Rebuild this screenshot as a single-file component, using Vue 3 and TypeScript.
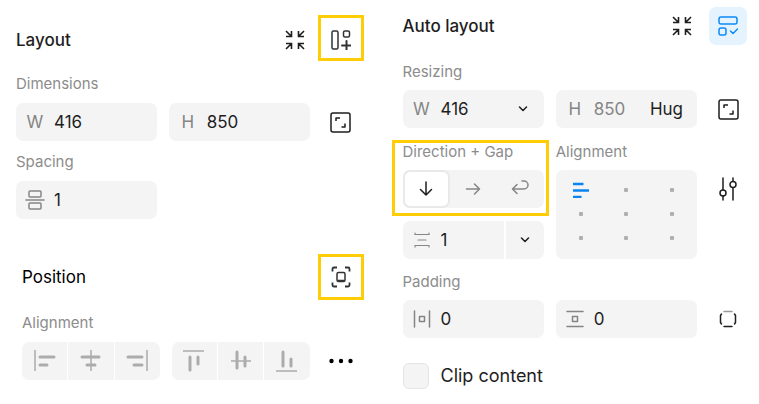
<script setup lang="ts">
import { ref } from 'vue'

type Direction = 'down' | 'right' | 'wrap'

const layoutWidth = ref('416')
const layoutHeight = ref('850')
const spacing = ref('1')

const autoWidth = ref('416')
const autoHeight = ref('850')
const gap = ref('1')
const paddingX = ref('0')
const paddingY = ref('0')
const clip = ref(false)

const direction = ref<Direction>('down')
const directions: { id: Direction; label: string; path: string }[] = [
  { id: 'down', label: 'Vertical', path: 'M10 3V16M4.5 10.500 10 16l5.500-5.500' },
  { id: 'right', label: 'Horizontal', path: 'M3.500 10H16.500M11.500 5l5 5-5 5' },
  { id: 'wrap', label: 'Wrap', path: 'M7 5.500 2.500 10 7 14.500M2.500 10H14a4 4 0 0 0 0-8h-2' },
]

const anchor = ref(0)

const alignGroups: { name: string; items: { label: string; rule: string; bars: string }[] }[] = [
  {
    name: 'Horizontal alignment',
    items: [
      { label: 'Align left', rule: 'M2 1v21', bars: 'M7 8h14M7 16h7' },
      { label: 'Align horizontal centers', rule: 'M12 1v21', bars: 'M3 8h17M8 16h8' },
      { label: 'Align right', rule: 'M22 1v21', bars: 'M3 8h14M9 16h8' },
    ],
  },
  {
    name: 'Vertical alignment',
    items: [
      { label: 'Align top', rule: 'M1 2h21', bars: 'M8 8v13M16 8v7' },
      { label: 'Align vertical centers', rule: 'M2 12h20', bars: 'M8 3v16M16 8v9' },
      { label: 'Align bottom', rule: 'M1 22h21', bars: 'M8 3v14M16 10v7' },
    ],
  },
]
</script>

<template>
  <main class="board">
    <div class="panel panel-left">
      <section class="section-layout">
        <header class="head">
          <h2 class="title">Layout</h2>
          <button class="tool" type="button" aria-label="Resize to fit">
            <svg width="20" height="20" viewBox="0 0 20 20" class="line collapse">
              <path d="M1 1 6 6M6.500 1v5.500H1M19 1 14 6M13.500 1v5.500H19M1 19 6 14M6.500 19v-5.500H1M19 19 14 14M13.500 19v-5.500H19" />
            </svg>
          </button>
          <button class="tool marked" type="button" aria-label="Use auto layout">
            <svg width="20" height="20" viewBox="0 0 20 20" class="line">
              <rect x="1" y="1" width="6" height="18" rx="1.500" />
              <rect x="12.500" y="1" width="6" height="6" rx="1.500" />
              <path d="M15.500 11v9M11 15.500h9" class="heavy" />
            </svg>
          </button>
        </header>
        <div class="cols">
          <div class="group pair">
            <h3 class="label">Dimensions</h3>
            <div class="halves">
              <label class="field"><span class="prefix">W</span><input v-model="layoutWidth" type="text" /></label>
              <label class="field"><span class="prefix">H</span><input v-model="layoutHeight" type="text" /></label>
            </div>
          </div>
          <button class="tool" type="button" aria-label="Lock aspect ratio">
            <svg width="21" height="21" viewBox="0 0 21 21" class="line">
              <rect x="1" y="1" width="19" height="19" rx="2" />
              <path d="M6 9V6h4M11.500 15H15v-3.500" class="corner" />
            </svg>
          </button>
        </div>
        <div class="cols">
          <div class="group">
            <h3 class="label">Spacing</h3>
            <label class="field">
              <span class="prefix">
                <svg width="20" height="22" viewBox="0 0 20 22" class="line" aria-label="Spacing" role="img">
                  <rect x="4" y="2" width="12" height="6" rx="1" />
                  <path d="M1 11h18" />
                  <rect x="4" y="14" width="12" height="6" rx="1" />
                </svg>
              </span>
              <input v-model="spacing" type="text" />
            </label>
          </div>
        </div>
      </section>

      <section class="section-position">
        <header class="head">
          <h2 class="title regular">Position</h2>
          <button class="tool marked" type="button" aria-label="Absolute position">
            <svg width="20" height="22" viewBox="0 0 20 22" class="line">
              <path d="M1.500 5.500V3q0-1.500 1.500-1.500h3M14 1.500H17q1.500 0 1.500 1.500v2.500M18.500 16.500V19q0 1.500-1.500 1.500h-3M6 20.500H3q-1.500 0-1.500-1.500v-2.500" class="dash" />
              <rect x="6" y="6.500" width="8" height="9" rx="1.500" />
              <path d="M7 14.500h6" />
            </svg>
          </button>
        </header>
        <div class="cols">
          <div class="group pair">
            <h3 class="label">Alignment</h3>
            <div class="halves">
              <div v-for="group in alignGroups" :key="group.name" class="segments" role="group" :aria-label="group.name">
                <button v-for="item in group.items" :key="item.label" type="button" :aria-label="item.label">
                  <svg width="24" height="24" viewBox="0 0 24 24">
                    <path :d="item.rule" class="rule" />
                    <path :d="item.bars" class="bars" />
                  </svg>
                </button>
              </div>
            </div>
          </div>
          <button class="tool" type="button" aria-label="More">
            <svg width="24" height="6" viewBox="0 0 24 6">
              <circle cx="2.500" cy="3" r="2.200" /><circle cx="12" cy="3" r="2.200" /><circle cx="21.500" cy="3" r="2.200" />
            </svg>
          </button>
        </div>
      </section>
    </div>

    <div class="panel panel-right">
      <header class="head">
        <h2 class="title">Auto layout</h2>
        <button class="tool" type="button" aria-label="Resize to fit">
          <svg width="20" height="20" viewBox="0 0 20 20" class="line collapse">
            <path d="M1 1 6 6M6.500 1v5.500H1M19 1 14 6M13.500 1v5.500H19M1 19 6 14M6.500 19v-5.500H1M19 19 14 14M13.500 19v-5.500H19" />
          </svg>
        </button>
        <button class="tool enabled" type="button" aria-label="Remove auto layout">
          <svg width="20" height="20" viewBox="0 0 20 20" class="line">
            <rect x="1" y="1" width="18" height="7" rx="2" />
            <rect x="1" y="12" width="7" height="7" rx="2" />
            <path d="m12.500 15 2.500 2.500 4.500-4.500" />
          </svg>
        </button>
      </header>

      <div class="cols">
        <div class="group pair">
          <h3 class="label">Resizing</h3>
          <div class="halves">
            <div class="field">
              <label class="prefix" for="auto-w">W</label>
              <input id="auto-w" v-model="autoWidth" type="text" />
              <button class="chevron" type="button" aria-label="Width options">
                <svg width="10" height="6" viewBox="0 0 10 6" class="line"><path d="m1.500 1 3.500 3.500L8.500 1" /></svg>
              </button>
            </div>
            <div class="field">
              <label class="prefix" for="auto-h">H</label>
              <input id="auto-h" v-model="autoHeight" class="muted" type="text" />
              <button class="mode" type="button">Hug</button>
            </div>
          </div>
        </div>
        <button class="tool" type="button" aria-label="Lock aspect ratio">
          <svg width="21" height="21" viewBox="0 0 21 21" class="line">
            <rect x="1" y="1" width="19" height="19" rx="2" />
            <path d="M6 9V6h4M11.500 15H15v-3.500" class="corner" />
          </svg>
        </button>
      </div>

      <div class="cols top">
        <div class="group">
          <div class="direction">
            <h3 class="label">Direction + Gap</h3>
            <div class="switch" role="group" aria-label="Direction">
              <button
                v-for="d in directions"
                :key="d.id"
                type="button"
                :aria-label="d.label"
                :aria-pressed="direction === d.id"
                :class="{ active: direction === d.id }"
                @click="direction = d.id"
              >
                <svg width="20" height="20" viewBox="0 0 20 20" class="line"><path :d="d.path" /></svg>
              </button>
            </div>
          </div>
          <div class="split">
            <label class="field">
              <span class="prefix">
                <svg width="16" height="16" viewBox="0 0 16 16" class="line thin" aria-label="Gap" role="img">
                  <path d="M1 1v1.500h14V1M4 8h8M1 15v-1.500h14V15" />
                </svg>
              </span>
              <input v-model="gap" type="text" />
            </label>
            <button class="field drop" type="button" aria-label="Gap options">
              <svg width="10" height="6" viewBox="0 0 10 6" class="line"><path d="m1.500 1 3.500 3.500L8.500 1" /></svg>
            </button>
          </div>
        </div>
        <div class="group">
          <h3 class="label">Alignment</h3>
          <div class="anchors" role="group" aria-label="Alignment">
            <button
              v-for="n in 9"
              :key="n"
              type="button"
              :aria-label="`Position ${n}`"
              :aria-pressed="anchor === n - 1"
              @click="anchor = n - 1"
            >
              <svg v-if="anchor === n - 1" width="18" height="16" viewBox="0 0 18 16" class="chosen">
                <path d="M1 2h10.500M1 8.500h16M1 15h8.500" />
              </svg>
              <span v-else class="dot"></span>
            </button>
          </div>
        </div>
        <button class="tool lowered" type="button" aria-label="Advanced settings">
          <svg width="20" height="24" viewBox="0 0 20 24" class="line">
            <path d="M5 1v11.500M5 19v4M15 1v3M15 11v12" />
            <circle cx="5" cy="16" r="3" /><circle cx="15" cy="7.500" r="3" />
          </svg>
        </button>
      </div>

      <div class="cols">
        <div class="group pair">
          <h3 class="label">Padding</h3>
          <div class="halves">
            <label class="field">
              <span class="prefix">
                <svg width="18" height="18" viewBox="0 0 18 18" class="line" aria-label="Horizontal padding" role="img">
                  <path d="M1.500 1v16M16.500 1v16" /><rect x="6.500" y="6.500" width="5" height="5" />
                </svg>
              </span>
              <input v-model="paddingX" type="text" />
            </label>
            <label class="field">
              <span class="prefix">
                <svg width="18" height="18" viewBox="0 0 18 18" class="line" aria-label="Vertical padding" role="img">
                  <path d="M1 1.500h16M1 16.500h16" /><rect x="6.500" y="6.500" width="5" height="5" />
                </svg>
              </span>
              <input v-model="paddingY" type="text" />
            </label>
          </div>
        </div>
        <button class="tool" type="button" aria-label="Individual padding">
          <svg width="18" height="18" viewBox="0 0 18 18" class="line">
            <path d="M5 1.500h8" class="soft" />
            <path d="M5 16.500h8" />
            <path d="M2.500 4 1.500 5.500v7l1 1.500M15.500 4l1 1.500v7l-1 1.500" />
          </svg>
        </button>
      </div>

      <label class="clip">
        <input v-model="clip" type="checkbox" />
        <span>Clip content</span>
      </label>
    </div>
  </main>
</template>

<style>
body {
  background: #fff;
}
</style>

<style scoped>
.board {
  display: grid;
  grid-template-columns: 1fr 1fr;
  font-family: Inter, "Liberation Sans", sans-serif;
  font-size: 17px;
  line-height: 24px;
  color: #1e1e1e;
}
.board *,
.board *::after {
  box-sizing: border-box;
}
.panel-left {
  padding: 15px 20px 20px 16px;
}
.panel-right {
  padding: 7px 12px 12px 23px;
}
h2,
h3 {
  margin: 0;
}
button,
input {
  font: inherit;
  color: inherit;
  margin: 0;
  padding: 0;
  border: 0;
  background: none;
}
svg {
  display: block;
  flex: none;
}
.line {
  fill: none;
  stroke: currentColor;
  stroke-width: 1.5;
  stroke-linecap: round;
  stroke-linejoin: round;
}
.line.thin {
  stroke-width: 1.2;
}
.heavy {
  stroke-width: 2;
}
.dash {
  stroke-width: 1.8;
  stroke-linecap: butt;
}
.corner {
  stroke-linecap: butt;
}
.soft {
  stroke: #999;
}
.collapse {
  stroke-width: 1.6;
  stroke-linecap: butt;
  stroke-linejoin: miter;
}

.head {
  display: flex;
  align-items: center;
  gap: 8px;
  min-height: 38px;
}
.panel-left .head {
  min-height: 46px;
  margin-bottom: 15px;
}
.section-layout .head {
  padding-top: 4px;
}
.section-layout .marked {
  margin-top: -4px;
  padding-top: 4px;
}
.panel-right .head {
  margin-bottom: 19px;
}
.title {
  flex: 1;
  font-size: 17px;
  font-weight: 500;
  line-height: 24px;
}
.title.regular {
  font-weight: 400;
  color: #000;
}
.tool {
  display: flex;
  align-items: center;
  justify-content: center;
  flex: none;
  width: 38px;
  height: 38px;
  border-radius: 7px;
}
.tool.marked {
  width: 46px;
  height: 46px;
  margin-right: -4px;
  margin-left: -4px;
  border: 3px solid #ffcd05;
  border-radius: 0;
  color: #333;
}
.tool.enabled {
  background: #e5f3ff;
  color: #0d8bf5;
}
.tool.lowered {
  margin-top: 26px;
}

.cols {
  display: grid;
  grid-template-columns: 1fr 1fr 38px;
  column-gap: 12px;
  align-items: end;
}
.cols.top {
  align-items: start;
  margin: 16px 0 15px;
}
.section-layout .cols + .cols {
  margin-top: 13px;
}
.pair {
  grid-column: span 2;
}
.halves {
  display: grid;
  grid-template-columns: 1fr 1fr;
  gap: 12px;
}
.label {
  margin-bottom: 10px;
  font-size: 15px;
  font-weight: 400;
  line-height: 16px;
  color: #8c8c8c;
}
.panel-left .label {
  margin-bottom: 11px;
}
.section-position {
  margin-top: 35px;
  padding-left: 6px;
}

.field {
  display: flex;
  align-items: center;
  height: 38px;
  min-width: 0;
  border-radius: 7px;
  background: #f4f4f4;
}
.prefix {
  display: flex;
  justify-content: center;
  flex: none;
  width: 38px;
  color: #858585;
}
.field input {
  flex: 1;
  width: 100%;
  min-width: 0;
}
.field input.muted {
  color: #858585;
}
.chevron {
  display: flex;
  align-items: center;
  justify-content: center;
  flex: none;
  width: 42px;
  height: 38px;
}
.mode {
  flex: none;
  padding-right: 14px;
}
.drop {
  justify-content: center;
}

.segments {
  display: grid;
  grid-template-columns: repeat(3, 1fr);
  gap: 1px;
  height: 38px;
  border-radius: 7px;
  overflow: hidden;
}
.segments button {
  display: flex;
  align-items: center;
  justify-content: center;
  background: #f4f4f4;
}
.rule {
  fill: none;
  stroke: #bdbdbd;
  stroke-width: 2;
}
.bars {
  fill: none;
  stroke: #acacac;
  stroke-width: 3;
  stroke-linecap: round;
}

.direction {
  position: relative;
  margin-bottom: 13px;
}
.direction::after {
  content: "";
  position: absolute;
  inset: -4px -5px -8px -11px;
  border: 3px solid #ffcd05;
  pointer-events: none;
}
.switch {
  display: grid;
  grid-template-columns: repeat(3, 1fr);
  height: 38px;
  border-radius: 7px;
  background: #f4f4f4;
}
.switch button {
  display: flex;
  align-items: center;
  justify-content: center;
  border-radius: 7px;
  color: #858585;
}
.switch .active {
  border: 2px solid #e9e9e9;
  background: #fff;
  color: #1e1e1e;
}
.split {
  display: grid;
  grid-template-columns: 1fr 38px;
  gap: 2px;
}
.split .field:first-child {
  border-radius: 7px 0 0 7px;
}
.split .drop {
  border-radius: 0 7px 7px 0;
}
.anchors {
  display: grid;
  grid-template-columns: repeat(3, 1fr);
  grid-auto-rows: 24px;
  padding: 8px 2px 9px;
  border-radius: 7px;
  background: #f4f4f4;
}
.anchors button {
  display: flex;
  align-items: center;
  justify-content: center;
}
.chosen {
  fill: none;
  stroke: #0a84f0;
  stroke-width: 2.4;
}
.dot {
  width: 4px;
  height: 4px;
  border-radius: 1px;
  background: #b0b0b0;
}

.clip {
  display: flex;
  align-items: center;
  gap: 12px;
  margin-top: 25px;
  font-size: 18px;
}
.clip input {
  appearance: none;
  width: 26px;
  height: 26px;
  border: 1px solid #e4e4e4;
  border-radius: 6px;
  background: #f4f4f4;
}
.clip input:checked {
  background: #0a84f0;
}
</style>
